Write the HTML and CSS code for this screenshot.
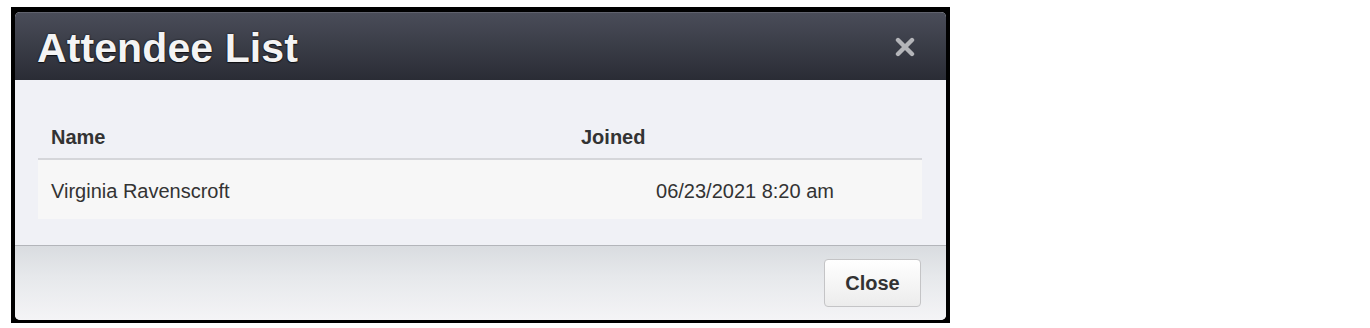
FILE: index.html
```html
<!DOCTYPE html>
<html>
<head>
<meta charset="utf-8">
<link rel="stylesheet" href="styles.css">
</head>
<body>
<div class="frame">
  <div class="modal">
    <div class="modal-header">
      <h1 class="title">Attendee List</h1>
      <button class="close-x" aria-label="Close">
        <svg width="20" height="20" viewBox="0 0 20 20"><path d="M3 3L17 17M17 3L3 17" stroke="#b4b5b9" stroke-width="4.4" stroke-linecap="round"/></svg>
      </button>
    </div>
    <div class="modal-body">
      <table class="list">
        <thead>
          <tr><th class="col-name">Name</th><th class="col-joined">Joined</th></tr>
        </thead>
        <tbody>
          <tr><td class="col-name">Virginia Ravenscroft</td><td class="col-joined date">06/23/2021 8:20 am</td></tr>
        </tbody>
      </table>
    </div>
    <div class="modal-footer">
      <button class="btn">Close</button>
    </div>
  </div>
</div>
</body>
</html>
```

FILE: styles.css
```css
html, body { margin: 0; padding: 0; background: #fff; }
body { font-family: "Liberation Sans", Arial, sans-serif; color: #333; }

.frame {
  margin: 7px 0 0 11px;
  width: 931px;
  padding: 5px 4px 3px 4px;
  background: #000;
}
.modal {
  border-radius: 5px;
  overflow: hidden;
  background: #f0f1f6;
}
.modal-header {
  height: 68px;
  box-sizing: border-box;
  padding: 4px 31px 0 22px;
  display: flex;
  align-items: flex-start;
  justify-content: space-between;
  background: linear-gradient(#4a4d59, #2a2c35);
  box-shadow: inset 0 1px 0 rgba(255,255,255,0.12);
}
.title {
  margin: 0;
  font-size: 41px;
  line-height: 64px;
  font-weight: bold;
  letter-spacing: 0.1px;
  color: #f4f4f4;
  text-shadow: 0 0 2px rgba(0,0,0,0.9), 0 1px 1px rgba(0,0,0,0.6);
}
.close-x {
  margin-top: 21px;
  padding: 0;
  border: 0;
  background: none;
  width: 20px;
  height: 20px;
  display: block;
}
.close-x svg { display: block; }

.modal-body {
  padding: 34px 24px 26px 23px;
}
.list {
  width: 100%;
  border-collapse: collapse;
  font-size: 20px;
  line-height: 24px;
}
.list th {
  text-align: left;
  font-weight: bold;
  padding: 11px 13px 9px;
  border-bottom: 2px solid #d5d6da;
}
.list td {
  padding: 19px 13px 16px;
  background: #f7f7f7;
}
.list .col-name { width: 504px; }
.list td.date { text-align: center; }

.modal-footer {
  border-top: 1px solid #b3b5ba;
  height: 75px;
  box-sizing: border-box;
  padding: 13px 25px 0 0;
  display: flex;
  justify-content: flex-end;
  align-items: flex-start;
  background: linear-gradient(#d9dce0, #e6e8eb 40%, #f4f4f6);
}
.btn {
  width: 97px;
  height: 48px;
  border: 1px solid #c4c4c6;
  border-radius: 4px;
  background: linear-gradient(#ffffff, #ececec);
  font-family: "Liberation Sans", Arial, sans-serif;
  font-size: 20px;
  font-weight: bold;
  color: #333;
  padding: 0;
}
```
